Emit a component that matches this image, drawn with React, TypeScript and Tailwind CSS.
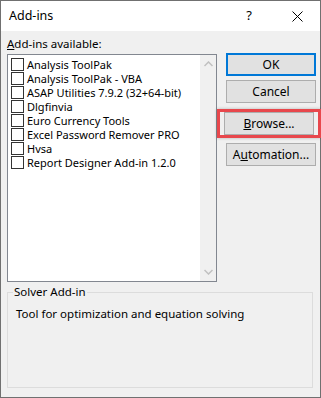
import React from "react";

const items = [
  "Analysis ToolPak",
  "Analysis ToolPak - VBA",
  "ASAP Utilities 7.9.2 (32+64-bit)",
  "Dlgfinvia",
  "Euro Currency Tools",
  "Excel Password Remover PRO",
  "Hvsa",
  "Report Designer Add-in 1.2.0",
];

const font = { fontFamily: '"Noto Sans", "Open Sans", sans-serif' };

function Btn({ children, primary }: { children: React.ReactNode; primary?: boolean }) {
  return (
    <div
      className={
        "h-[23px] w-[90px] flex items-center justify-center bg-[#e1e1e1] text-[12px] text-black " +
        (primary ? "border-2 border-[#0078d7]" : "border border-[#adadad]")
      }
    >
      {children}
    </div>
  );
}

export default function App() {
  return (
    <div className="w-[321px] h-[398px] bg-[#f0f0f0] border border-[#707070] flex flex-col" style={font}>
      <div className="h-[30px] bg-white flex items-center pl-[8px] shrink-0">
        <span className="text-[12.5px] text-black">Add-ins</span>
        <span className="ml-auto mr-[40px] text-[13px] text-black">?</span>
        <svg width="11" height="11" viewBox="0 0 11 11" className="mr-[17px]">
          <path d="M0.5 0.5 L10.5 10.5 M10.5 0.5 L0.5 10.5" stroke="#000" strokeWidth="1" />
        </svg>
      </div>
      <div className="flex-1 flex flex-col px-[6px]">
        <div className="flex">
          <div className="flex flex-col">
            <div className="h-[23px] pt-[5px] text-[11.5px] leading-[16px] text-black">
              <span className="underline">A</span>dd-ins available:
            </div>
            <div className="w-[210px] h-[228px] border border-[#828790] bg-white flex">
              <div className="flex-1 pt-[2px] pl-[3px]">
                {items.map((t) => (
                  <div key={t} className="h-[14px] flex items-center">
                    <div className="w-[13px] h-[13px] border border-[#333] bg-white shrink-0" />
                    <span className="ml-[3px] text-[11px] leading-[13px] text-black whitespace-nowrap">{t}</span>
                  </div>
                ))}
              </div>
              <div className="w-[16px] bg-[#f0f0f0] flex flex-col items-center justify-between py-[6px]">
                <svg width="9" height="6" viewBox="0 0 9 6">
                  <path d="M0.5 5 L4.5 1 L8.5 5" stroke="#c0c0c0" strokeWidth="1.5" fill="none" />
                </svg>
                <svg width="9" height="6" viewBox="0 0 9 6">
                  <path d="M0.5 1 L4.5 5 L8.5 1" stroke="#c0c0c0" strokeWidth="1.5" fill="none" />
                </svg>
              </div>
            </div>
          </div>
          <div className="ml-[9px] pt-[22px] flex flex-col">
            <Btn primary>OK</Btn>
            <div className="mt-[4px]">
              <Btn>Cancel</Btn>
            </div>
            <div className="mt-[6px] -ml-[9px] w-[104px] h-[29px] border-[3px] border-[#e8474c] shadow-[0_0_3px_rgba(0,0,0,0.25)] flex items-center pl-[4px]">
              <Btn>
                <span className="underline">B</span>rowse...
              </Btn>
            </div>
            <div className="mt-[5px]">
              <Btn>
                A<span className="underline">u</span>tomation...
              </Btn>
            </div>
          </div>
        </div>
        <div className="relative mt-[10px] w-[306px] h-[96px] border border-[#dcdcdc]">
          <div className="absolute -top-[9px] left-[5px] px-[1px] bg-[#f0f0f0] text-[11.5px] leading-[16px] text-black">
            Solver Add-in
          </div>
          <div className="pt-[13px] pl-[8px] text-[11.5px] leading-[16px] text-black">
            Tool for optimization and equation solving
          </div>
        </div>
      </div>
    </div>
  );
}
